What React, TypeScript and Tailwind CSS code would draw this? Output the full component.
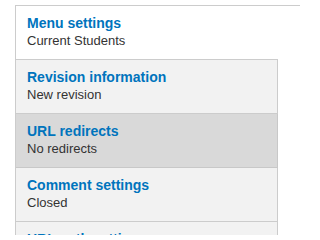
const tabs = [
  { title: "Menu settings", summary: "Current Students", state: "selected" },
  { title: "Revision information", summary: "New revision", state: "" },
  { title: "URL redirects", summary: "No redirects", state: "hover" },
  { title: "Comment settings", summary: "Closed", state: "" },
  { title: "URL path settings", summary: "Automatic alias", state: "" },
]

export default function App() {
  return (
    <div className="w-[300px] h-[235px] overflow-hidden bg-white pt-[5px] pl-[15px] font-['Liberation_Sans',Arial,sans-serif] leading-[18px]">
      <div className="border-t border-l border-[#cccccc]">
        <ul className="w-[262px]">
          {tabs.map((tab) => (
            <li
              key={tab.title}
              className={
                tab.state === "selected"
                  ? "h-[54px] bg-white border-b border-[#cccccc] pt-[8px] pl-[11px]"
                  : tab.state === "hover"
                    ? "h-[54px] bg-[#d9d9d9] border-b border-r border-[#c8c8c8] pt-[8px] pl-[11px]"
                    : "h-[54px] bg-[#f2f2f2] border-b border-r border-[#cccccc] pt-[8px] pl-[11px]"
              }
            >
              <div className="text-[14px] font-bold text-[#0074bd]">{tab.title}</div>
              <div className="text-[13px] text-[#333333]">{tab.summary}</div>
            </li>
          ))}
        </ul>
      </div>
    </div>
  )
}
